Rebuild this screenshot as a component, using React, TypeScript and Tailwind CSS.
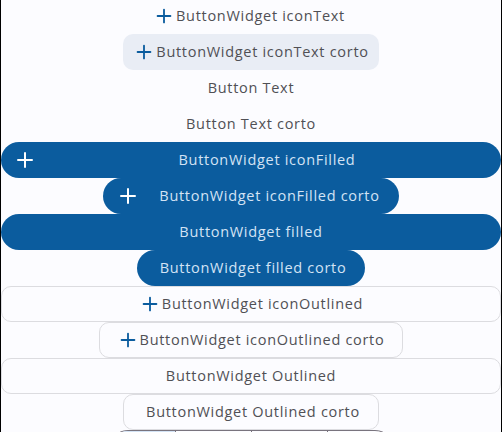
import { Plus } from 'lucide-react'

const txt = 'text-[14.5px] tracking-[0.7px] leading-none whitespace-nowrap'

function PlusIcon({ className }: { className: string }) {
  return <Plus className={className} strokeWidth={2} />
}

export default function App() {
  return (
    <div
      className="w-[502px] h-[432px] overflow-hidden bg-[#fcfcff] border-x border-black"
      style={{ fontFamily: '"Open Sans", "Noto Sans", sans-serif' }}
    >
      <div className="-mt-[2px] flex flex-col items-center">
        {/* iconText */}
        <button className="h-9 flex items-center gap-[1px] px-3 text-[#505055]">
          <PlusIcon className="w-[22px] h-[22px] -ml-[4px] text-[#0b5c9e]" />
          <span className={txt}>ButtonWidget iconText</span>
        </button>
        <button className="h-9 flex items-center gap-[1px] pl-[10px] pr-[10px] rounded-[10px] bg-[#e9edf5] text-[#505055]">
          <PlusIcon className="w-[22px] h-[22px] text-[#0b5c9e]" />
          <span className={txt}>ButtonWidget iconText corto</span>
        </button>

        {/* text */}
        <button className="h-9 flex items-center px-3 text-[#505055]">
          <span className={txt}>Button Text</span>
        </button>
        <button className="h-9 flex items-center px-3 text-[#505055]">
          <span className={txt}>Button Text corto</span>
        </button>

        {/* iconFilled */}
        <button className="w-full h-9 flex items-center pl-[12px] rounded-full bg-[#0b5c9e] text-[#d3e3f5]">
          <PlusIcon className="w-[24px] h-[24px] text-white" />
          <span className={`${txt} flex-1 text-center pr-[4px]`}>ButtonWidget iconFilled</span>
        </button>
        <button className="h-9 flex items-center gap-[19px] pl-[13px] pr-[19px] rounded-full bg-[#0b5c9e] text-[#d3e3f5]">
          <PlusIcon className="w-[24px] h-[24px] text-white" />
          <span className={txt}>ButtonWidget iconFilled corto</span>
        </button>

        {/* filled */}
        <button className="w-full h-9 flex items-center justify-center rounded-full bg-[#0b5c9e] text-[#d3e3f5]">
          <span className={txt}>ButtonWidget filled</span>
        </button>
        <button className="h-9 flex items-center pl-[23px] pr-[19px] rounded-full bg-[#0b5c9e] text-[#d3e3f5]">
          <span className={txt}>ButtonWidget filled corto</span>
        </button>

        {/* iconOutlined */}
        <button className="w-full h-9 flex items-center justify-center gap-[1px] rounded-[10px] border border-[#dcdce0] text-[#505055]">
          <PlusIcon className="w-[22px] h-[22px] text-[#0b5c9e]" />
          <span className={txt}>ButtonWidget iconOutlined</span>
        </button>
        <button className="h-9 flex items-center gap-[1px] pl-[17px] pr-[18px] rounded-[10px] border border-[#dcdce0] text-[#505055]">
          <PlusIcon className="w-[22px] h-[22px] text-[#0b5c9e]" />
          <span className={txt}>ButtonWidget iconOutlined corto</span>
        </button>

        {/* outlined */}
        <button className="w-full h-9 flex items-center justify-center rounded-[10px] border border-[#dcdce0] text-[#505055]">
          <span className={txt}>ButtonWidget Outlined</span>
        </button>
        <button className="h-9 flex items-center pl-[22px] pr-[18px] rounded-[10px] border border-[#dcdce0] text-[#505055]">
          <span className={txt}>ButtonWidget Outlined corto</span>
        </button>

        {/* segmented, cut off */}
        <div className="w-[287px] h-10 flex rounded-full border border-[#79747e] overflow-hidden">
          <div className="flex-1 bg-[#d3e3f5] border-r border-[#79747e]" />
          <div className="w-[76px] border-r border-[#79747e]" />
          <div className="w-[76px] border-r border-[#79747e]" />
          <div className="flex-1" />
        </div>
      </div>
    </div>
  )
}
